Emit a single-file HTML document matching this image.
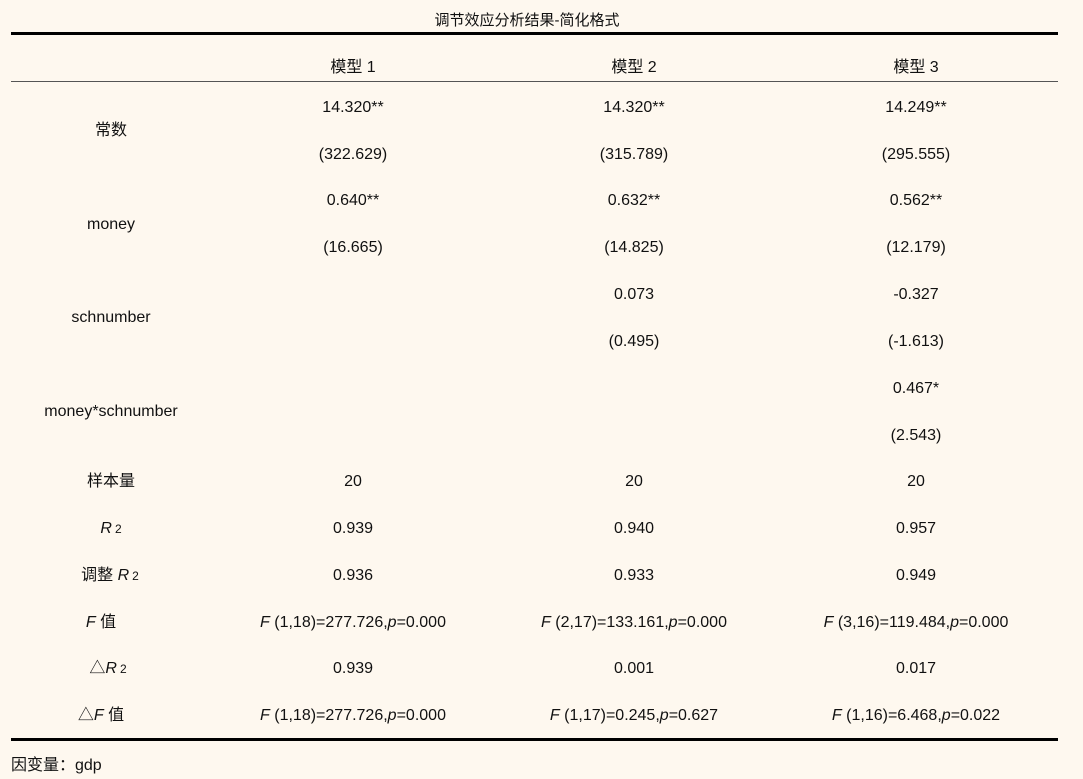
<!DOCTYPE html>
<html><head><meta charset="utf-8"><style>
html,body{margin:0;padding:0}
body{width:1083px;height:779px;background:#fef8ef;position:relative;overflow:hidden;font-family:"Liberation Sans","Noto Sans CJK SC",sans-serif;font-size:16px;color:#111}
.t{position:absolute;line-height:18px;white-space:nowrap;transform:translateX(-50%);margin-top:2px}
.l{position:absolute;left:11px;width:1047px;background:#000}
i{font-style:italic}
sub{font-size:12px;vertical-align:baseline;margin-left:3px}
</style></head><body>
<div class="t" style="left:527px;top:10px;font-size:15px">调节效应分析结果-简化格式</div>
<div class="l" style="top:32px;height:3px"></div>
<div class="l" style="top:81px;height:1px;background:#555"></div>
<div class="l" style="top:738px;height:3px"></div>
<div class="t" style="left:353px;top:57px">模型 1</div>
<div class="t" style="left:634px;top:57px">模型 2</div>
<div class="t" style="left:916px;top:57px">模型 3</div>

<div class="t" style="left:111px;top:120px">常数</div>
<div class="t" style="left:111px;top:214px">money</div>
<div class="t" style="left:111px;top:307px">schnumber</div>
<div class="t" style="left:111px;top:401px">money*schnumber</div>

<div class="t" style="left:353px;top:97px">14.320**</div>
<div class="t" style="left:634px;top:97px">14.320**</div>
<div class="t" style="left:916px;top:97px">14.249**</div>
<div class="t" style="left:353px;top:144px">(322.629)</div>
<div class="t" style="left:634px;top:144px">(315.789)</div>
<div class="t" style="left:916px;top:144px">(295.555)</div>
<div class="t" style="left:353px;top:190px">0.640**</div>
<div class="t" style="left:634px;top:190px">0.632**</div>
<div class="t" style="left:916px;top:190px">0.562**</div>
<div class="t" style="left:353px;top:237px">(16.665)</div>
<div class="t" style="left:634px;top:237px">(14.825)</div>
<div class="t" style="left:916px;top:237px">(12.179)</div>
<div class="t" style="left:634px;top:284px">0.073</div>
<div class="t" style="left:916px;top:284px">-0.327</div>
<div class="t" style="left:634px;top:331px">(0.495)</div>
<div class="t" style="left:916px;top:331px">(-1.613)</div>
<div class="t" style="left:916px;top:378px">0.467*</div>
<div class="t" style="left:916px;top:425px">(2.543)</div>

<div class="t" style="left:111px;top:471px">样本量</div>
<div class="t" style="left:353px;top:471px">20</div>
<div class="t" style="left:634px;top:471px">20</div>
<div class="t" style="left:916px;top:471px">20</div>

<div class="t" style="left:111px;top:518px"><i>R</i><sub>2</sub></div>
<div class="t" style="left:353px;top:518px">0.939</div>
<div class="t" style="left:634px;top:518px">0.940</div>
<div class="t" style="left:916px;top:518px">0.957</div>

<div class="t" style="left:110px;top:565px">调整 <i>R</i><sub>2</sub></div>
<div class="t" style="left:353px;top:565px">0.936</div>
<div class="t" style="left:634px;top:565px">0.933</div>
<div class="t" style="left:916px;top:565px">0.949</div>

<div class="t" style="left:101px;top:612px"><i>F</i> 值</div>
<div class="t" style="left:353px;top:612px"><i>F</i> (1,18)=277.726,<i>p</i>=0.000</div>
<div class="t" style="left:634px;top:612px"><i>F</i> (2,17)=133.161,<i>p</i>=0.000</div>
<div class="t" style="left:916px;top:612px"><i>F</i> (3,16)=119.484,<i>p</i>=0.000</div>

<div class="t" style="left:108px;top:658px">△<i>R</i><sub>2</sub></div>
<div class="t" style="left:353px;top:658px">0.939</div>
<div class="t" style="left:634px;top:658px">0.001</div>
<div class="t" style="left:916px;top:658px">0.017</div>

<div class="t" style="left:101px;top:705px">△<i>F</i> 值</div>
<div class="t" style="left:353px;top:705px"><i>F</i> (1,18)=277.726,<i>p</i>=0.000</div>
<div class="t" style="left:634px;top:705px"><i>F</i> (1,17)=0.245,<i>p</i>=0.627</div>
<div class="t" style="left:916px;top:705px"><i>F</i> (1,16)=6.468,<i>p</i>=0.022</div>

<div style="position:absolute;left:11px;top:757px;line-height:18px">因变量：gdp</div>
</body></html>
